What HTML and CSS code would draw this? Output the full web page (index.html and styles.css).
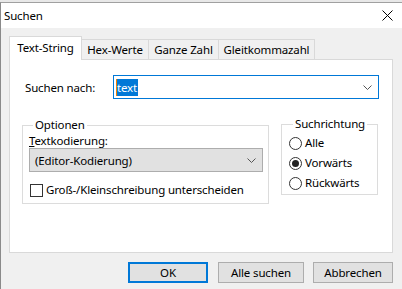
FILE: index.html
```html
<!DOCTYPE html>
<html lang="de">
<head>
    <meta charset="UTF-8">
    <title>Suchen</title>
    <link rel="stylesheet" href="styles.css">
</head>
<body>
    <div class="window">
        <div class="titlebar">
            <span class="title">Suchen</span>
            <svg class="close" width="11" height="11" viewBox="0 0 11 11">
                <path d="M0.5 0.5 L10.5 10.5 M10.5 0.5 L0.5 10.5" stroke="#000" stroke-width="1"/>
            </svg>
        </div>

        <div class="content">
            <div class="tabs">
                <div class="tab active">Text-String</div>
                <div class="tab hex">Hex-Werte</div>
                <div class="tab int">Ganze Zahl</div>
                <div class="tab float">Gleitkommazahl</div>
            </div>

            <div class="panel">
                <div class="search-row">
                    <span class="search-label">Suchen nach:</span>
                    <div class="combo focused">
                        <span class="caret"></span><span class="selected">text</span>
                        <svg class="chevron" width="9" height="5" viewBox="0 0 9 5">
                            <path d="M0.5 0.5 L4.5 4.5 L8.5 0.5" fill="none" stroke="#555" stroke-width="1"/>
                        </svg>
                    </div>
                </div>

                <div class="groups">
                    <fieldset class="group options">
                        <legend>Optionen</legend>
                        <div class="field-label"><u>T</u>extkodierung:</div>
                        <div class="combo dropdown">
                            <span>(Editor-Kodierung)</span>
                            <svg class="chevron" width="9" height="5" viewBox="0 0 9 5">
                                <path d="M0.5 0.5 L4.5 4.5 L8.5 0.5" fill="none" stroke="#555" stroke-width="1"/>
                            </svg>
                        </div>
                        <label class="check-row">
                            <span class="checkbox"></span>
                            <span>Groß-/Kleinschreibung unterscheiden</span>
                        </label>
                    </fieldset>

                    <fieldset class="group direction">
                        <legend>Suchrichtung</legend>
                        <label class="radio-row"><span class="radio"></span>Alle</label>
                        <label class="radio-row"><span class="radio checked"></span>Vorwärts</label>
                        <label class="radio-row"><span class="radio"></span>Rückwärts</label>
                    </fieldset>
                </div>
            </div>

            <div class="buttons">
                <button class="btn default">OK</button>
                <button class="btn">Alle suchen</button>
                <button class="btn">Abbrechen</button>
            </div>
        </div>
    </div>
</body>
</html>
```

FILE: styles.css
```css
body {
    margin: 0;
    background-color: #e8e8e8;
    font-family: "Noto Sans", "Open Sans", sans-serif;
    font-size: 11.5px;
    letter-spacing: -0.15px;
    color: #000;
    overflow: hidden;
}

.window {
    margin-top: 2px;
    border-top: 1px solid #a0a0a0;
    border-left: 1px solid #8a8a8a;
    height: 300px;
    background-color: #f0f0f0;
}

.titlebar {
    height: 25px;
    background-color: #fff;
    display: flex;
    align-items: center;
    justify-content: space-between;
    padding: 0 9px 0 3px;
}

.title {
    line-height: 16px;
}

.close {
    display: block;
}

.content {
    padding: 8px 0 0 8px;
}

/* tabs */
.tabs {
    display: flex;
    align-items: flex-end;
    height: 23px;
}

.tab {
    box-sizing: border-box;
    height: 20px;
    line-height: 19px;
    text-align: center;
    border: 1px solid #d9d9d9;
    border-bottom: none;
    border-left: none;
    background-color: #f0f0f0;
}

.tab.active {
    width: 73px;
    height: 24px;
    line-height: 22px;
    border-left: 1px solid #d9d9d9;
    background-color: #fff;
    margin-bottom: -1px;
    position: relative;
}

.tab.hex {
    width: 67px;
}

.tab.int {
    width: 70px;
}

.tab.float {
    width: 96px;
}

.panel {
    width: 382px;
    height: 192px;
    background-color: #fff;
    border: 1px solid #d9d9d9;
}

/* search row */
.search-row {
    display: flex;
    align-items: center;
    margin-top: 15px;
    padding-left: 15px;
}

.search-label {
    width: 88px;
}

.combo {
    display: flex;
    align-items: center;
    box-sizing: border-box;
    height: 24px;
    border: 1px solid #adadad;
}

.combo.focused {
    width: 266px;
    border-color: #0078d7;
    padding-left: 2px;
}

.caret {
    width: 1px;
    height: 17px;
    background-color: #f08000;
}

.selected {
    background-color: #0078d7;
    color: #fff;
    line-height: 17px;
    padding-right: 1px;
}

.chevron {
    margin-left: auto;
    margin-right: 6px;
}

/* group boxes */
.groups {
    display: flex;
    align-items: flex-start;
    margin-top: 18px;
    padding-left: 12px;
}

.group {
    margin: 0;
    border: 1px solid #dcdcdc;
    box-sizing: border-box;
}

.group legend {
    padding: 0 2px;
    margin-left: 4px;
    line-height: 16px;
}

.options {
    width: 247px;
    height: 87px;
    padding: 0 5px 0 6px;
}

.direction {
    width: 97px;
    height: 79px;
    margin-left: 12px;
    margin-top: -1px;
    padding: 1px 0 0 7px;
}

.field-label {
    line-height: 15px;
    margin-top: 0;
}

.combo.dropdown {
    width: 234px;
    margin-top: 0;
    background-color: #e1e1e1;
    padding-left: 5px;
}

.check-row {
    display: flex;
    align-items: center;
    margin-top: 10px;
    line-height: 16px;
}

.checkbox {
    width: 11px;
    height: 11px;
    border: 1px solid #333;
    margin: 0 3px 0 1px;
    background-color: #fff;
}

.radio-row {
    display: flex;
    align-items: center;
    height: 20px;
    line-height: 16px;
}

.radio {
    width: 11px;
    height: 11px;
    border: 1px solid #333;
    border-radius: 50%;
    margin-right: 3px;
    display: flex;
    align-items: center;
    justify-content: center;
}

.radio.checked::after {
    content: "";
    width: 7px;
    height: 7px;
    border-radius: 50%;
    background-color: #222;
}

/* buttons */
.buttons {
    display: flex;
    gap: 9px;
    padding-left: 119px;
    margin-top: 9px;
}

.btn {
    font-family: "Noto Sans", "Open Sans", sans-serif;
    font-size: 11.5px;
    letter-spacing: -0.15px;
    color: #000;
    height: 21px;
    width: 80px;
    padding: 0;
    background-color: #e1e1e1;
    border: 1px solid #adadad;
    border-radius: 0;
}

.btn:nth-child(2) {
    width: 86px;
}

.btn.default {
    border: 2px solid #0078d7;
    margin-right: 1px;
}
```
